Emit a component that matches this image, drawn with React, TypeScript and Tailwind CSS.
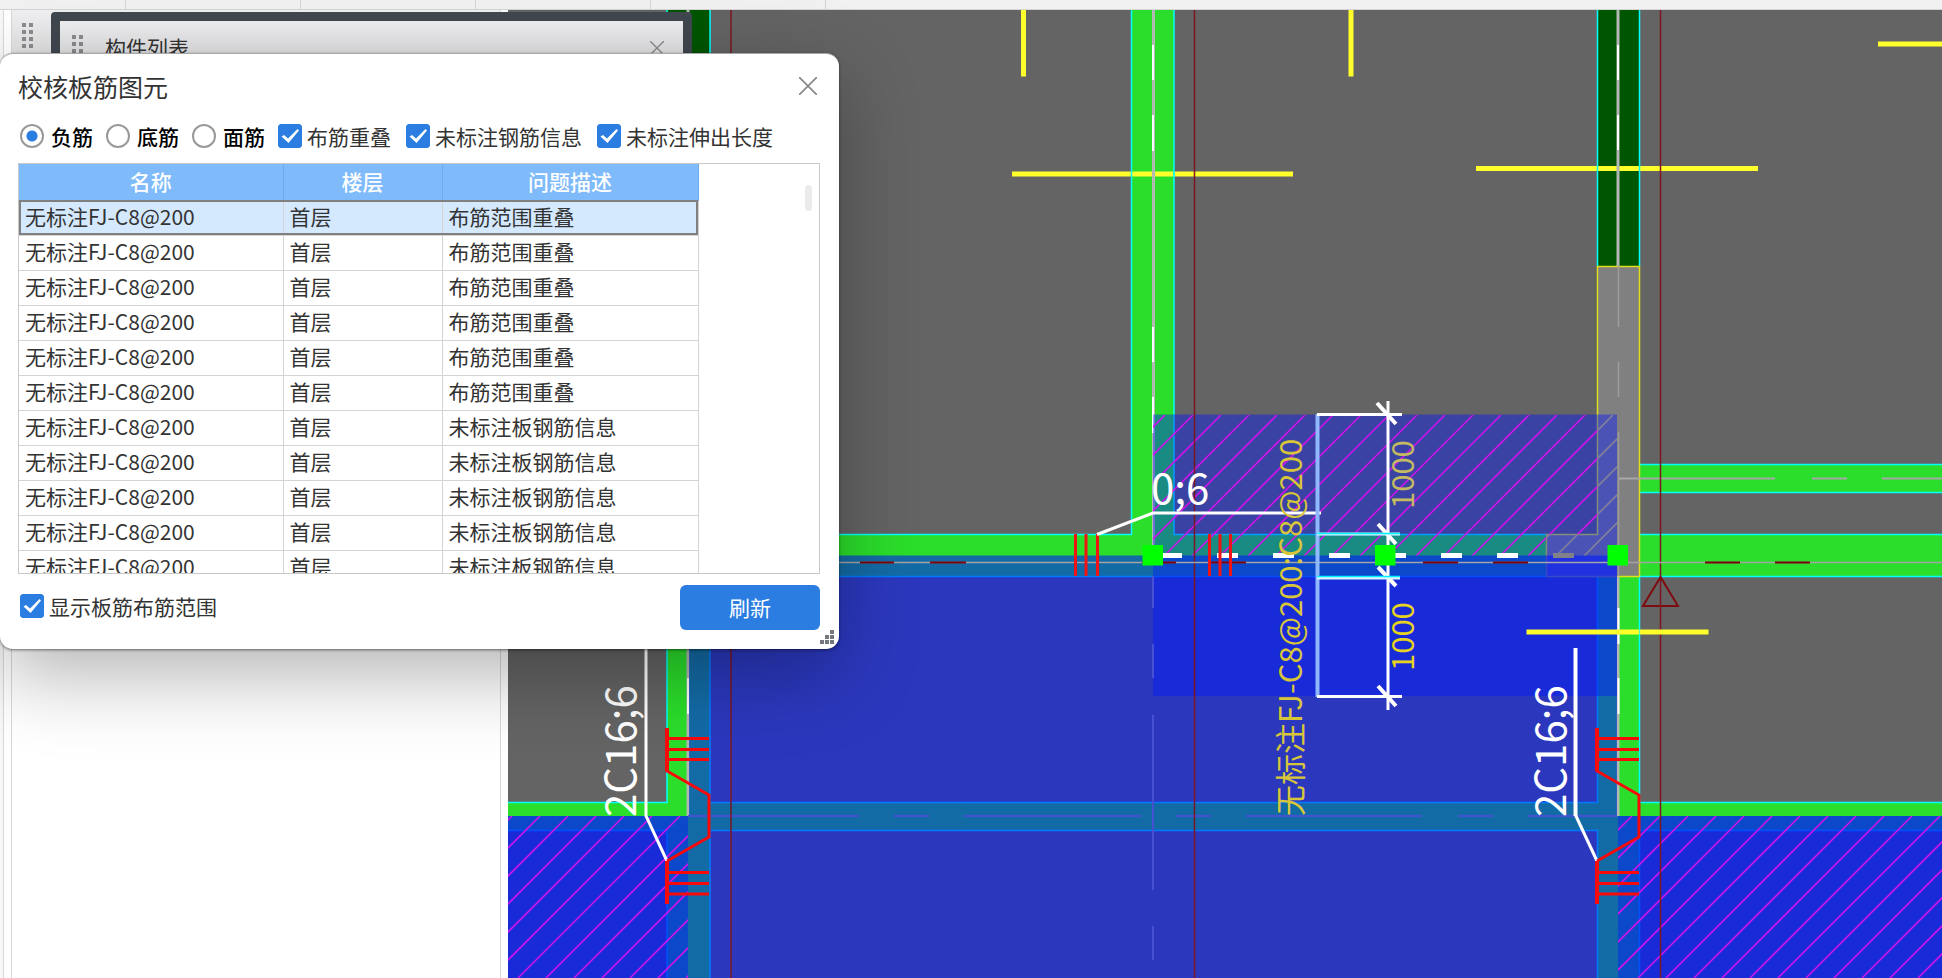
import React, { useState } from "react";

const FONT = "font-['Noto_Sans_CJK_SC',sans-serif]";

const rows = [
  "布筋范围重叠",
  "布筋范围重叠",
  "布筋范围重叠",
  "布筋范围重叠",
  "布筋范围重叠",
  "布筋范围重叠",
  "未标注板钢筋信息",
  "未标注板钢筋信息",
  "未标注板钢筋信息",
  "未标注板钢筋信息",
  "未标注板钢筋信息",
];

/* 45° hatch lines, each satisfying x + y = c with c stepping by 28 */
function hatch(x0: number, y0: number, x1: number, y1: number) {
  let d = "";
  const first = Math.ceil((x0 + y0 - 12) / 28) * 28 + 12;
  for (let c = first; c < x1 + y1; c += 28) {
    d += `M${c - y0} ${y0}L${c - y1} ${y1}`;
  }
  return d;
}

function Stirrups({ x }: { x: number }) {
  return (
    <g transform={`translate(${x} 0)`} stroke="#f80a0a" strokeWidth="3" fill="none">
      <path d="M0 728V771L42 795V837L0 861" />
      <path strokeWidth="4" d="M0 728V771M0 861V904" />
      <path d="M0 738.500H42M0 749.500H42M0 759.500H42M0 872.500H42M0 883.500H42M0 894H42" />
      <text transform="translate(-31 817) rotate(-90)" fontSize="42" fill="#fff" stroke="none">
        2C16;6
      </text>
    </g>
  );
}

function Drawing() {
  return (
    <svg
      className={`absolute inset-0 h-full w-full ${FONT}`}
      viewBox="508 10 1434 968"
      preserveAspectRatio="xMinYMin slice"
      role="img"
      aria-label="板筋平面图"
    >
      <defs>
        <clipPath id="sel">
          <path d="M1153 415H1597.500V534.500H1546.500V555.500H1153Z" />
        </clipPath>
        <clipPath id="selCol">
          <path d="M1597.500 415H1617V555.500H1546.500V534.500H1597.500Z" />
        </clipPath>
        <clipPath id="left">
          <path d="M508 816H688V978H508Z" />
        </clipPath>
        <clipPath id="right">
          <path d="M1618 816H1942V978H1618Z" />
        </clipPath>
      </defs>

      <rect x="508" y="10" width="1434" height="968" fill="#646464" />

      {/* beams */}
      <g fill="#2bde2b">
        <path d="M1131.500 10H1174V534.500H1597.500V576.500H667V534.500H1131.500Z" />
        <path d="M667 576H710V978H667ZM1597.500 576H1639.500V978H1597.500Z" />
        <path d="M508 802.500H1942V830.500H508ZM1639.500 464.500H1942V492.500H1639.500ZM1639.500 534.500H1942V576.500H1639.500Z" />
      </g>
      <path fill="#005500" d="M667 10H710V534H667ZM1597.500 10H1639.500V266H1597.500Z" />

      {/* rebar marks lying under the beam outlines */}
      <path
        stroke="#ffff2b"
        strokeWidth="5"
        d="M1023.500 10V76.500M1351 10V76.500M1012 174H1293M1476 168.500H1758M1878 44H1942"
      />

      <g stroke="#00ffff" strokeWidth="1.500" fill="none">
        <path d="M1131.500 10V534.500H667M1174 10V534.500H1546.500M667 576.500H1597.500" />
        <path d="M667 10V534M710 10V534M1597.500 10V266M1639.500 10V266" />
        <path d="M667 576V802.500H508M508 830.500H667V978M710 576.500V802.500H1597.500V576.500M710 978V830.500H1597.500V978" />
        <path d="M1639.500 576.500V802.500H1942M1942 830.500H1639.500V978M1639.500 576.500H1942M1639.500 534.500H1942M1639.500 464.500H1942M1639.500 492.500H1942" />
      </g>

      {/* column */}
      <path
        fill="#808080"
        stroke="#e0e01a"
        strokeWidth="1.500"
        d="M1597.500 266.500H1639.500V576.500H1546.500V534.500H1597.500Z"
      />

      {/* beam centre lines */}
      <path stroke="#b4b8b4" strokeWidth="3" d="M688 10V816M1153.500 10V555M1618 10V266M1618 576.500V816" />
      <path
        stroke="#fff"
        strokeWidth="2"
        d="M1153 45V80M1153 115V151M1153 327V362M1153 397V433M1618 45V80M1618 115V150M1618.500 608V644M1618.500 678V714M688 678V714"
      />
      <path stroke="#9c9c9c" strokeWidth="1.500" d="M1618.500 266V327M1618.500 362V397M1618.500 432V576" />
      <path stroke="#a8a8a8" strokeWidth="2" d="M1619 478.500H1775M1812 478.500H1847M1882 478.500H1942" />

      {/* slab ranges */}
      <g fill="#0218ff" fillOpacity="0.580">
        <path d="M689 555.500H1617V978H689ZM508 816H689V978H508ZM1617 816H1942V978H1617Z" />
      </g>
      <g fill="#0015ff" fillOpacity="0.410">
        <path d="M1153 414.500H1617V696H1153ZM508 816H688V978H508ZM1618 816H1942V978H1618Z" />
      </g>
      <path
        stroke="#4550d2"
        strokeWidth="2"
        d="M1153 576V608M1153 644V678M1153 715V890M1153 926V960M688 816H859M894 816H929M964 816H1141M1176 816H1211M1246 816H1422M1458 816H1493M1528 816H1617"
      />

      <g stroke="#cc14ea" strokeWidth="1.600" fill="none">
        <path clipPath="url(#sel)" d={hatch(1153, 415, 1617, 556)} />
        <path clipPath="url(#selCol)" stroke="#80809a" d={hatch(1153, 415, 1617, 556)} />
        <path clipPath="url(#left)" d={hatch(508, 816, 688, 978)} />
        <path clipPath="url(#right)" d={hatch(1618, 816, 1942, 978)} />
      </g>

      {/* grid axes */}
      <path stroke="#7d1620" strokeWidth="1.500" d="M731 10V978M1194.500 10V978M1660.500 10V978" />
      <path stroke="#a4a4a4" strokeWidth="1.500" d="M700 562.500H1942" />
      <path
        stroke="#780008"
        strokeWidth="2"
        d="M860 562.500H894M930 562.500H966M1142 562.500H1176M1211 562.500H1246M1423 562.500H1458M1493 562.500H1528M1705 562.500H1740M1775 562.500H1810"
      />
      <path stroke="#7d0c10" strokeWidth="2" fill="none" d="M1660.500 577L1643 606H1678Z" />

      <path stroke="#ffff2b" strokeWidth="5" d="M1526.500 632H1708.500" />
      <path stroke="#00ffff" strokeWidth="1" strokeOpacity="0.700" d="M1639.500 629V635M1131.500 171V177M1174 171V177" />

      {/* selected rebar axis */}
      <path stroke="#fff" strokeWidth="5" strokeDasharray="21 35" d="M1161 555.500H1545" />
      <path stroke="#80808a" strokeWidth="5" d="M1553 555.500H1574" />

      <g stroke="#f01414" strokeWidth="3">
        <path d="M1075.500 534V576M1086 534V576M1097.500 534V576M1209.500 534V576M1220 534V576M1230.500 534V576" />
      </g>
      <path stroke="#fff" strokeWidth="3" fill="none" d="M1097 534.500L1153 513H1321" />
      <text x="1151" y="504" fontSize="42" fill="#fff">
        0;6
      </text>

      {/* dimension */}
      <path stroke="#8fb8ff" strokeWidth="4" d="M1317.500 414V697" />
      <g stroke="#fff" strokeWidth="3" fill="none">
        <path d="M1317 414.500H1402M1317 696.500H1402" />
        <path d="M1388 401V710" />
        <path strokeWidth="4" d="M1377 403L1396 424M1378 524L1396 544M1378 567L1396 586M1378 686L1396 706" />
      </g>
      <path stroke="#d8f4ff" strokeWidth="3" d="M1317 534H1400M1317 578H1400" />
      <path stroke="#00f4ff" strokeWidth="1.500" d="M1317 533.500H1400M1317 576.500H1400" />
      <g fontSize="31">
        <text transform="translate(1414 509) rotate(-90)" fill="#c3ba62">1000</text>
        <text transform="translate(1414 671) rotate(-90)" fill="#e6d321">1000</text>
        <text transform="translate(1302 816) rotate(-90)" fill="#d8c63a">无标注FJ-C8@200:C8@200</text>
      </g>
      <path fill="#00ff00" d="M1142.500 545H1163V565.500H1142.500ZM1375 545H1395.500V565.500H1375ZM1607.500 545H1628V565.500H1607.500Z" />

      {/* stirrup leaders */}
      <g stroke="#fff" fill="none">
        <path strokeWidth="3" d="M646 640V816L667 861" />
        <path strokeWidth="4" d="M1575.500 648V816" />
        <path strokeWidth="3" d="M1575.500 815L1597 861" />
      </g>
      <Stirrups x={667} />
      <Stirrups x={1597} />
    </svg>
  );
}

function Grip() {
  return (
    <svg width="11" height="26" viewBox="0 0 11 26" fill="#8c8c90" aria-hidden="true">
      {[0, 7, 14, 21].map((y) => (
        <path key={y} d={`M0 ${y}h4v4h-4zM7 ${y}h4v4h-4z`} />
      ))}
    </svg>
  );
}

function Cross({ size }: { size: number }) {
  return (
    <svg width={size} height={size} viewBox="0 0 18 18" stroke="#888" strokeWidth="1.700" aria-hidden="true">
      <path d="M0 0L18 18M18 0L0 18" />
    </svg>
  );
}

function Check({ label }: { label: string }) {
  const [on, setOn] = useState(true);
  return (
    <label className="flex items-center gap-[5px] whitespace-nowrap">
      <span className="grid h-6 w-6 shrink-0">
        <input
          type="checkbox"
          checked={on}
          onChange={() => setOn(!on)}
          className="col-start-1 row-start-1 h-6 w-6 appearance-none rounded-[3px] border border-[#2b7de1] bg-white checked:bg-[#2b7de1]"
        />
        {on && (
          <svg viewBox="0 0 24 24" className="pointer-events-none col-start-1 row-start-1" fill="#fff" aria-hidden="true">
            <path d="M3.500 12.500L6 11L10 14.500L19.500 5L21 6.500L10.500 19Z" />
          </svg>
        )}
      </span>
      <span>{label}</span>
    </label>
  );
}

function ReviewDialog() {
  const [kind, setKind] = useState("负筋");
  const [current, setCurrent] = useState(0);
  const cell = "border-b border-r border-[#d4d4d4] pt-0 pb-[3px] pl-[6px]";
  return (
    <section
      role="dialog"
      aria-label="校核板筋图元"
      className="absolute left-0 top-[53px] flex w-[839px] flex-col rounded-[13px] border-t border-[#a8a8a8] bg-white pb-[19px] pl-[18px] pr-[19px] text-[21px] leading-[30px] text-[#333] shadow-[0_1px_3px_rgba(0,0,0,0.5),0_25px_80px_rgba(0,0,0,0.3)]"
    >
      <header className="mb-0.5 flex h-16 items-center justify-between pr-[3px]">
        <h2 className="text-[25px]">校核板筋图元</h2>
        <button type="button" aria-label="关闭">
          <Cross size={18} />
        </button>
      </header>
      <div className="flex h-8 items-center pl-0.5">
        {["负筋", "底筋", "面筋"].map((k) => (
          <label key={k} className="mr-[13px] flex items-center gap-[7px] font-medium text-black">
            <input
              type="radio"
              name="kind"
              checked={kind === k}
              onChange={() => setKind(k)}
              className="h-6 w-6 appearance-none rounded-full border-2 border-[#999] bg-white checked:bg-[radial-gradient(circle,#2b7de1_5px,white_6px)]"
            />
            {k}
          </label>
        ))}
        <div className="flex gap-[15px]">
          <Check label="布筋重叠" />
          <Check label="未标注钢筋信息" />
          <Check label="未标注伸出长度" />
        </div>
      </div>
      <div className="mt-[11px] flex h-[411px] justify-between overflow-hidden border border-[#c8c8c8]">
        <table className="w-[679px] table-fixed border-collapse self-start">
          <colgroup>
            <col className="w-[264px]" />
            <col className="w-[159px]" />
            <col className="w-[256px]" />
          </colgroup>
          <thead>
            <tr className="h-9 bg-[#7fbbfb] text-white">
              {["名称", "楼层", "问题描述"].map((h) => (
                <th key={h} className="border-b border-r border-[#6eaaf0] px-0 pt-0 pb-[2px] font-medium">
                  {h}
                </th>
              ))}
            </tr>
          </thead>
          <tbody>
            {rows.map((issue, i) => (
              <tr
                key={i}
                onClick={() => setCurrent(i)}
                className={
                  i === current
                    ? "h-[35px] bg-[#d4e9fe] outline-2 -outline-offset-2 outline-[#808080]"
                    : "h-[35px]"
                }
              >
                <td className={cell}>无标注FJ-C8@200</td>
                <td className={cell}>首层</td>
                <td className={cell}>{issue}</td>
              </tr>
            ))}
          </tbody>
        </table>
        <div className="mr-[7px] mt-[21px] h-[26px] w-[7px] rounded-full bg-[#ebebeb]" />
      </div>
      <footer className="mt-[11px] flex h-[45px] items-start justify-between pl-0.5">
        <div className="pt-[6px]">
          <Check label="显示板筋布筋范围" />
        </div>
        <button type="button" className="h-[45px] w-[140px] rounded-md bg-[#2b7de1] pb-[2px] text-white">
          刷新
        </button>
      </footer>
      <svg
        className="absolute bottom-[5px] right-[5px]"
        width="14"
        height="14"
        viewBox="0 0 14 14"
        fill="#74787e"
        aria-hidden="true"
      >
        <path d="M10 0h4v4h-4zM5 5h4v4h-4zM10 5h4v4h-4zM0 10h4v4h-4zM5 10h4v4h-4zM10 10h4v4h-4z" />
      </svg>
    </section>
  );
}

export default function App() {
  return (
    <div className={`relative flex min-h-screen flex-col overflow-hidden bg-white ${FONT}`}>
      <div className="flex h-[10px] border-b border-[#d4d4d4] bg-[#f1f1f1]">
        <div className="w-[126px] border-r border-[#d4d4d4]" />
        {[1, 2, 3, 4].map((n) => (
          <div key={n} className="w-[175px] border-r border-[#d4d4d4]" />
        ))}
      </div>
      <div className="flex grow">
        <div className="mr-[7px] w-1 border-r border-[#d8d8d8] bg-[#f8f8f8]" />
        <aside className="mr-[7px] w-[490px] border-x border-[#d8d8d8] bg-white">
          <div className="h-[50px] bg-linear-to-b from-[#f0f0f2] to-[#dededf] pl-[10px] pt-[13px]">
            <Grip />
          </div>
        </aside>
        <main className="relative grow overflow-hidden bg-[#646464]">
          <Drawing />
        </main>
      </div>

      <section
        aria-label="构件列表"
        className="absolute left-[51px] top-3 h-[120px] w-[641px] rounded-[4px] border-[9px] border-[#41474f] bg-white"
      >
        <header className="flex h-[53px] items-center bg-linear-to-b from-[#f0f0f2] to-[#d8d8da] pl-3 pr-[19px] text-[21px] text-[#333]">
          <Grip />
          <h2 className="ml-[22px] grow">构件列表</h2>
          <button type="button" aria-label="关闭构件列表">
            <Cross size={14} />
          </button>
        </header>
      </section>

      <ReviewDialog />
    </div>
  );
}
